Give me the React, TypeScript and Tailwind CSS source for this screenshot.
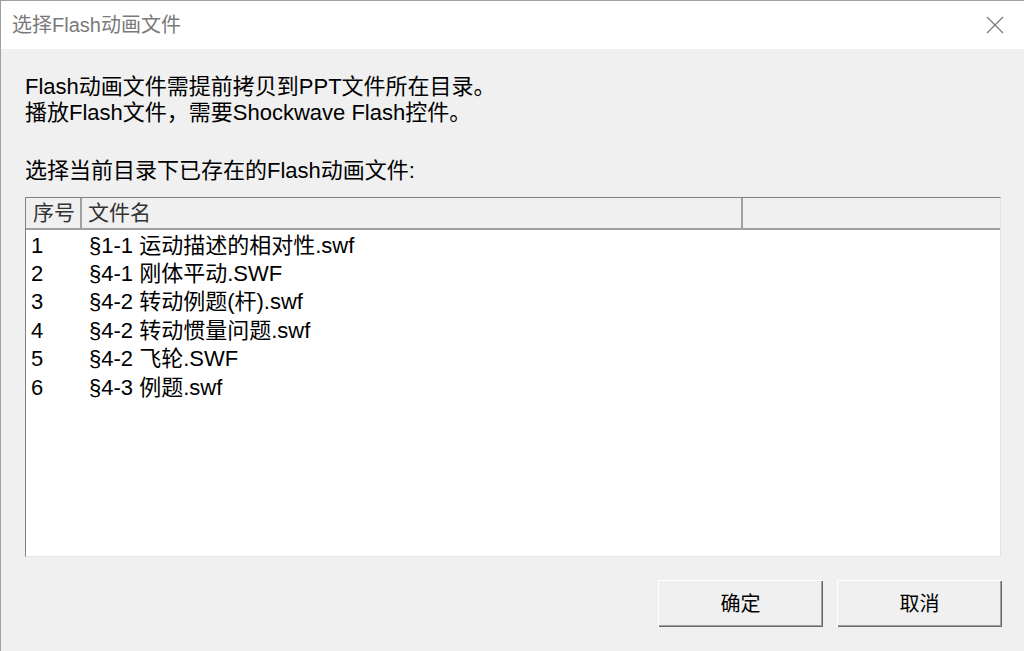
const files = [
  { no: "1", name: "§1-1 运动描述的相对性.swf" },
  { no: "2", name: "§4-1 刚体平动.SWF" },
  { no: "3", name: "§4-2 转动例题(杆).swf" },
  { no: "4", name: "§4-2 转动惯量问题.swf" },
  { no: "5", name: "§4-2 飞轮.SWF" },
  { no: "6", name: "§4-3 例题.swf" },
]

const font = "font-['Liberation_Sans','Noto_Sans_CJK_SC',sans-serif]"

function DialogButton({ label }: { label: string }) {
  return (
    <button
      className={`flex h-[47px] w-[165px] items-center justify-center bg-[#f0f0f0] text-[20px] text-black shadow-[inset_1px_1px_#ffffff,inset_-1px_-1px_#696969,inset_-2px_-2px_#a0a0a0] ${font}`}
    >
      {label}
    </button>
  )
}

export default function App() {
  return (
    <div className={`flex h-[651px] w-[1024px] flex-col overflow-hidden border-l border-t border-[#a0a0a0] bg-[#f0f0f0] ${font}`}>
      {/* title bar */}
      <div className="flex h-[48px] items-center justify-between bg-white pl-[11px] pr-[20px]">
        <span className="text-[20px] text-[#7a7a7a]">选择Flash动画文件</span>
        <svg width="18" height="18" viewBox="0 0 18 18" className="text-[#7a7a7a]">
          <path d="M1 1 L17 17 M17 1 L1 17" stroke="currentColor" strokeWidth="1.2" fill="none" />
        </svg>
      </div>

      <div className="flex flex-col px-[24px]">
        <div className="pt-[25px] text-[22px] leading-[26px] text-black">
          <p>Flash动画文件需提前拷贝到PPT文件所在目录。</p>
          <p>播放Flash文件，需要Shockwave Flash控件。</p>
          <p className="mt-[32px]">选择当前目录下已存在的Flash动画文件:</p>
        </div>

        {/* list view */}
        <div className="mt-[13px] flex h-[360px] w-[976px] flex-col border-l border-t border-r border-b border-l-[#828282] border-t-[#828282] border-r-[#e3e3e3] border-b-[#e3e3e3] bg-white">
          <div className="flex h-[32px] shrink-0 border-b-2 border-[#a0a0a0] bg-[#f0f0f0] text-[21px] text-[#333]">
            <div className="flex w-[56px] items-center border-r-2 border-[#a0a0a0] pl-[7px]">序号</div>
            <div className="flex w-[661px] items-center border-r-2 border-[#a0a0a0] pl-[6px]">文件名</div>
            <div className="flex-1" />
          </div>
          <div className="pt-[1px] text-[22px] text-black">
            {files.map((f) => (
              <div key={f.no} className="flex h-[28.4px] items-center">
                <span className="w-[63px] pl-[5px]">{f.no}</span>
                <span>{f.name}</span>
              </div>
            ))}
          </div>
        </div>

        <div className="-mr-[2px] mt-[23px] flex justify-end gap-[14px]">
          <DialogButton label="确定" />
          <DialogButton label="取消" />
        </div>
      </div>
    </div>
  )
}
